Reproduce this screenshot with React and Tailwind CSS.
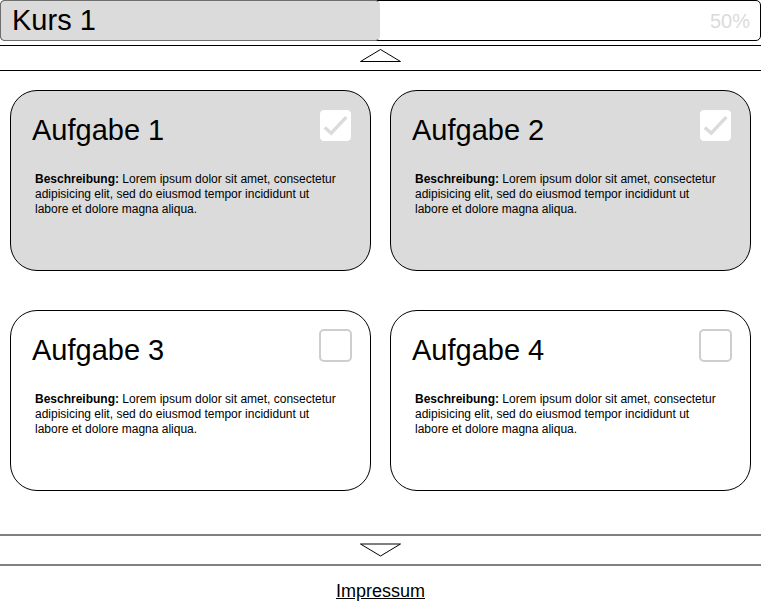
import { useState } from "react";

const tasks = [
  { id: 1, title: "Aufgabe 1", done: true },
  { id: 2, title: "Aufgabe 2", done: true },
  { id: 3, title: "Aufgabe 3", done: false },
  { id: 4, title: "Aufgabe 4", done: false },
];

function CourseHeader({ title, percent }) {
  return (
    <header className="relative flex h-[41px] items-center justify-between rounded-[5px] border border-black pr-[10px] pl-[11px]">
      <div
        role="progressbar"
        aria-label={title}
        aria-valuenow={percent}
        className="absolute -inset-y-px -left-px rounded-[5px] border border-y-[#6e6e6e] border-r-[#dbdbdb] border-l-[#6e6e6e] bg-[#dbdbdb]"
        style={{ width: `${percent}%` }}
      />
      <h1 className="relative pb-[2px] text-[29px] leading-[36px]">{title}</h1>
      <span className="text-xl text-[#dbdbdb]">{percent}%</span>
    </header>
  );
}

function TaskCard({ task }) {
  const [done, setDone] = useState(task.done);
  const id = `task-${task.id}`;
  return (
    <article
      className={`h-[181px] rounded-[27px] border border-black pt-[18px] pr-[18px] pl-[21px] ${done ? "bg-[#dbdbdb]" : "bg-white"}`}
    >
      <div className="flex items-start justify-between">
        <label htmlFor={id} className="pt-[2px] text-[29px] leading-[38px]">
          {task.title}
        </label>
        <span className="grid">
          <input
            id={id}
            type="checkbox"
            checked={done}
            onChange={() => setDone(!done)}
            className="col-start-1 row-start-1 size-[33px] appearance-none rounded-[5px] border-2 border-[#cecece] bg-white checked:border checked:border-[#dbdbdb]"
          />
          {done && (
            <svg
              viewBox="0 0 33 33"
              className="pointer-events-none col-start-1 row-start-1 size-[33px]"
              fill="none"
              stroke="#dbdbdb"
              strokeWidth="3.4"
              aria-hidden="true"
            >
              <path d="M5.8 18.5 12.2 24.2 27.3 8.2" />
            </svg>
          )}
        </span>
      </div>
      <p className="pt-[23px] pr-[14px] pl-[3px] text-xs leading-[15px]">
        <b>Beschreibung:</b> Lorem ipsum dolor sit amet, consectetur adipisicing
        elit, sed do eiusmod tempor incididunt ut labore et dolore magna aliqua.
      </p>
    </article>
  );
}

export default function App() {
  return (
    <div className="bg-white pr-px font-['Liberation_Sans',Arial,sans-serif] text-black">
      <CourseHeader title="Kurs 1" percent={50} />
      <button
        type="button"
        aria-label="Nach oben"
        className="mt-1 flex h-[26px] w-full justify-center border-y border-black pt-[3px]"
      >
        <svg width="41" height="13" viewBox="0 0 41 13" fill="none" stroke="#000">
          <path d="M.5 12.5 20.5.5 40.5 12.5Z" />
        </svg>
      </button>
      <main className="grid grid-cols-2 gap-x-[19px] gap-y-[39px] px-[10px] pt-[19px] pb-[43px]">
        {tasks.map((task) => (
          <TaskCard key={task.id} task={task} />
        ))}
      </main>
      <button
        type="button"
        aria-label="Nach unten"
        className="flex h-8 w-full justify-center border-y-2 border-[#808080] pt-[7px]"
      >
        <svg width="41" height="14" viewBox="0 0 41 14" fill="none" stroke="#000">
          <path d="M.5 1 20.5 13 40.5 1Z" />
        </svg>
      </button>
      <footer className="pt-[14px] text-center text-lg leading-[22px]">
        <a href="#impressum" className="underline">
          Impressum
        </a>
      </footer>
    </div>
  );
}
